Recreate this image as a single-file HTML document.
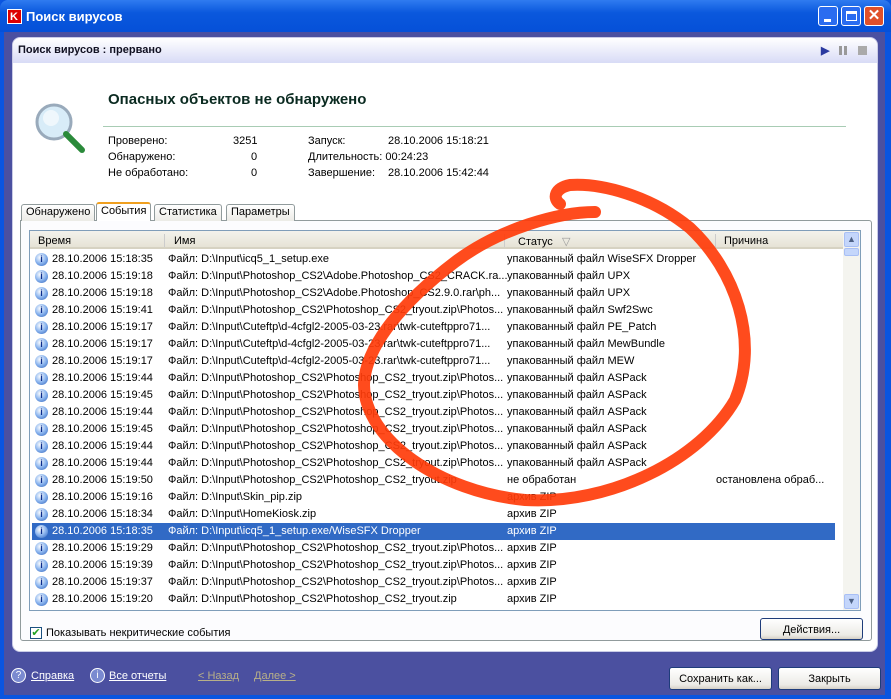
<!DOCTYPE html>
<html><head><meta charset="utf-8"><style>
*{box-sizing:border-box;margin:0;padding:0}
body{width:891px;height:699px;overflow:hidden;background:#0a55e0;font-family:"Liberation Sans",sans-serif;font-size:11px;color:#000;position:relative}
.abs{position:absolute}
#title{left:0;top:0;width:891px;height:32px;background:linear-gradient(#2f7bf0,#0a58dd 40%,#0550d8);border-radius:8px 8px 0 0;color:#fff;font:bold 13px "Liberation Sans",sans-serif}
#frame{left:4px;top:32px;width:881px;height:663px;background:#4b50a0}
#panel{left:12px;top:37px;width:866px;height:615px;background:#fff;border-radius:8px;border:1px solid #c9cbe6}
#hdr{left:13px;top:38px;width:864px;height:25px;background:linear-gradient(#fff,#d8dbf6);border-radius:8px 8px 0 0;font-weight:bold;font-size:11px;color:#112}
.t{position:absolute;white-space:nowrap}
.row{position:absolute;left:32px;width:803px;height:17px;font-size:11px;line-height:17px}
.row span{position:absolute;white-space:nowrap}
.ic{left:3px;top:2px;width:13px;height:13px;border-radius:50%;background:radial-gradient(circle at 40% 35%,#fff,#8ab4ee 50%,#2a5db8);color:#0a2c8c;font-size:9px;line-height:13px;text-align:center;font-weight:bold}
.btn{position:absolute;border:1px solid #1e3c7a;border-radius:3px;background:linear-gradient(#fff,#ecebe6 80%,#d6d0c5);text-align:center;line-height:22px;font-size:11px}
.tab{position:absolute;top:204px;height:17px;border:1px solid #919b9c;border-bottom:none;background:linear-gradient(#fff,#ecebe6);font-size:11px;line-height:15px;padding:0 4px;border-radius:3px 3px 0 0}
</style></head><body>
<div id="frame" class="abs"></div>
<div id="title" class="abs">
 <div class="abs" style="left:7px;top:9px;width:15px;height:15px;background:#fff"><div style="position:absolute;left:1px;top:1px;width:13px;height:13px;background:#d00"></div><div style="position:absolute;left:3px;top:2px;color:#fff;font:bold 11px sans-serif">K</div></div>
 <div class="t" style="left:26px;top:9px">Поиск вирусов</div>
 <div class="abs" style="left:818px;top:6px;width:20px;height:20px;border:1px solid #fff;border-radius:3px;background:#2a6cf0"><div style="position:absolute;left:5px;top:12px;width:7px;height:3px;background:#fff"></div></div>
 <div class="abs" style="left:841px;top:6px;width:20px;height:20px;border:1px solid #fff;border-radius:3px;background:#2a6cf0"><div style="position:absolute;left:4px;top:4px;width:11px;height:10px;border:1px solid #fff;border-top:3px solid #fff"></div></div>
 <div class="abs" style="left:864px;top:6px;width:20px;height:20px;border:1px solid #fff;border-radius:3px;background:#e0502a;color:#fff;text-align:center;font:bold 15px/18px sans-serif">✕</div>
</div>
<div id="panel" class="abs"></div>
<div id="hdr" class="abs"><div class="t" style="left:5px;top:6px">Поиск вирусов : прервано</div>
 <div class="t" style="left:808px;top:6px;color:#2a3aa0;font-size:11px">▶</div>
 <div class="abs" style="left:826px;top:8px;width:3px;height:9px;background:#999"></div><div class="abs" style="left:831px;top:8px;width:3px;height:9px;background:#999"></div>
 <div class="abs" style="left:845px;top:8px;width:9px;height:9px;background:#aaa"></div>
</div>
<svg class="abs" style="left:34px;top:100px" width="56" height="56"><circle cx="20" cy="22" r="17" fill="#d8ecf8" stroke="#9ab" stroke-width="3"/><circle cx="17" cy="18" r="8" fill="#fff" opacity=".6"/><path d="M32 34 L48 50" stroke="#2a8a3a" stroke-width="6" stroke-linecap="round"/></svg>
<div class="t" style="left:108px;top:91px;font-size:15px;font-weight:bold;color:#0a2a20">Опасных объектов не обнаружено</div>
<div class="abs" style="left:103px;top:126px;width:743px;height:1px;background:#a8ccb4"></div>
<div class="t" style="left:108px;top:135px">Проверено:</div><div class="t" style="left:233px;top:135px">3251</div>
<div class="t" style="left:108px;top:151px">Обнаружено:</div><div class="t" style="left:251px;top:151px">0</div>
<div class="t" style="left:108px;top:167px">Не обработано:</div><div class="t" style="left:251px;top:167px">0</div>
<div class="t" style="left:308px;top:135px">Запуск:</div><div class="t" style="left:388px;top:135px">28.10.2006 15:18:21</div>
<div class="t" style="left:308px;top:151px">Длительность: 00:24:23</div>
<div class="t" style="left:308px;top:167px">Завершение:</div><div class="t" style="left:388px;top:167px">28.10.2006 15:42:44</div>
<div class="abs" style="left:20px;top:220px;width:852px;height:421px;border:1px solid #919b9c;border-radius:0 3px 3px 3px;background:#fcfcfe"></div>
<div class="tab" style="left:21px">Обнаружено</div>
<div class="tab" style="left:96px;top:202px;height:19px;border-top:2px solid #f0a020;background:#fff">События</div>
<div class="tab" style="left:154px">Статистика</div>
<div class="tab" style="left:226px">Параметры</div>
<div class="abs" style="left:29px;top:230px;width:832px;height:381px;border:1px solid #7f9db9;background:#fff"></div>
<div class="abs" style="left:30px;top:231px;width:813px;height:18px;background:linear-gradient(#f3f2ec,#e6e3d6);border-bottom:2px solid #d6d2c2"></div>
<div class="t" style="left:38px;top:235px">Время</div><div class="abs" style="left:164px;top:234px;width:1px;height:13px;background:#ccc"></div>
<div class="t" style="left:174px;top:235px">Имя</div><div class="abs" style="left:504px;top:234px;width:1px;height:13px;background:#ccc"></div>
<div class="t" style="left:518px;top:235px">Статус &nbsp;&nbsp;<span style="color:#999">▽</span></div><div class="abs" style="left:715px;top:234px;width:1px;height:13px;background:#ccc"></div>
<div class="t" style="left:724px;top:235px">Причина</div>
<div class="abs" style="left:843px;top:231px;width:17px;height:379px;background:#f4f4ef"></div>
<div class="abs" style="left:844px;top:232px;width:15px;height:15px;background:#c4d6fb;border:1px solid #a8bff5;border-radius:2px;color:#4d6185;font-size:9px;text-align:center;line-height:13px">▲</div>
<div class="abs" style="left:844px;top:248px;width:15px;height:8px;background:#c4d6fb;border:1px solid #a8bff5;border-radius:2px"></div>
<div class="abs" style="left:844px;top:594px;width:15px;height:15px;background:#c4d6fb;border:1px solid #a8bff5;border-radius:2px;color:#4d6185;font-size:9px;text-align:center;line-height:13px">▼</div>
<div id="rows"></div>
<div class="abs" style="left:30px;top:627px;width:12px;height:12px;border:1px solid #1c5180;background:#fff;color:#21a121;font-size:11px;line-height:10px;text-align:center">✔</div>
<div class="t" style="left:46px;top:627px">Показывать некритические события</div>
<div class="btn" style="left:760px;top:618px;width:103px;height:22px">Действия...</div>
<div class="abs" style="left:11px;top:668px;width:15px;height:15px;border-radius:50%;background:#7a8ad0;border:1px solid #fff;color:#fff;font-size:10px;text-align:center;line-height:13px">?</div>
<div class="t" style="left:31px;top:670px;color:#fff;text-decoration:underline">Справка</div>
<div class="abs" style="left:90px;top:668px;width:15px;height:15px;border-radius:50%;background:#7a8ad0;border:1px solid #fff;color:#fff;font-size:10px;text-align:center;line-height:13px">i</div>
<div class="t" style="left:109px;top:670px;color:#fff;text-decoration:underline">Все отчеты</div>
<div class="t" style="left:198px;top:670px;color:#b8b088;text-decoration:underline">&lt; Назад</div>
<div class="t" style="left:254px;top:670px;color:#b8b088;text-decoration:underline">Далее &gt;</div>
<div class="btn" style="left:669px;top:667px;width:103px;height:23px">Сохранить как...</div>
<div class="btn" style="left:778px;top:667px;width:103px;height:23px">Закрыть</div>
<svg class="abs" style="left:0;top:0" width="891" height="699"><path d="M595 212 C560 212 500 228 455 262 C405 300 365 345 364 385 C365 440 440 492 525 500 C610 505 700 460 735 400 C760 340 735 270 690 228 C650 195 600 183 570 185 C555 188 552 198 560 204" fill="none" stroke="#ff3c0a" stroke-width="12" stroke-linecap="round" opacity=".92"/></svg>
<script>
var d=[["28.10.2006 15:18:35","Файл: D:\\Input\\icq5_1_setup.exe","упакованный файл WiseSFX Dropper",""],
["28.10.2006 15:19:18","Файл: D:\\Input\\Photoshop_CS2\\Adobe.Photoshop_CS2_CRACK.ra...","упакованный файл UPX",""],
["28.10.2006 15:19:18","Файл: D:\\Input\\Photoshop_CS2\\Adobe.Photoshop_CS2.9.0.rar\\ph...","упакованный файл UPX",""],
["28.10.2006 15:19:41","Файл: D:\\Input\\Photoshop_CS2\\Photoshop_CS2_tryout.zip\\Photos...","упакованный файл Swf2Swc",""],
["28.10.2006 15:19:17","Файл: D:\\Input\\Cuteftp\\d-4cfgl2-2005-03-23.rar\\twk-cuteftppro71...","упакованный файл PE_Patch",""],
["28.10.2006 15:19:17","Файл: D:\\Input\\Cuteftp\\d-4cfgl2-2005-03-23.rar\\twk-cuteftppro71...","упакованный файл MewBundle",""],
["28.10.2006 15:19:17","Файл: D:\\Input\\Cuteftp\\d-4cfgl2-2005-03-23.rar\\twk-cuteftppro71...","упакованный файл MEW",""],
["28.10.2006 15:19:44","Файл: D:\\Input\\Photoshop_CS2\\Photoshop_CS2_tryout.zip\\Photos...","упакованный файл ASPack",""],
["28.10.2006 15:19:45","Файл: D:\\Input\\Photoshop_CS2\\Photoshop_CS2_tryout.zip\\Photos...","упакованный файл ASPack",""],
["28.10.2006 15:19:44","Файл: D:\\Input\\Photoshop_CS2\\Photoshop_CS2_tryout.zip\\Photos...","упакованный файл ASPack",""],
["28.10.2006 15:19:45","Файл: D:\\Input\\Photoshop_CS2\\Photoshop_CS2_tryout.zip\\Photos...","упакованный файл ASPack",""],
["28.10.2006 15:19:44","Файл: D:\\Input\\Photoshop_CS2\\Photoshop_CS2_tryout.zip\\Photos...","упакованный файл ASPack",""],
["28.10.2006 15:19:44","Файл: D:\\Input\\Photoshop_CS2\\Photoshop_CS2_tryout.zip\\Photos...","упакованный файл ASPack",""],
["28.10.2006 15:19:50","Файл: D:\\Input\\Photoshop_CS2\\Photoshop_CS2_tryout.zip","не обработан","остановлена обраб..."],
["28.10.2006 15:19:16","Файл: D:\\Input\\Skin_pip.zip","архив ZIP",""],
["28.10.2006 15:18:34","Файл: D:\\Input\\HomeKiosk.zip","архив ZIP",""],
["28.10.2006 15:18:35","Файл: D:\\Input\\icq5_1_setup.exe/WiseSFX Dropper","архив ZIP",""],
["28.10.2006 15:19:29","Файл: D:\\Input\\Photoshop_CS2\\Photoshop_CS2_tryout.zip\\Photos...","архив ZIP",""],
["28.10.2006 15:19:39","Файл: D:\\Input\\Photoshop_CS2\\Photoshop_CS2_tryout.zip\\Photos...","архив ZIP",""],
["28.10.2006 15:19:37","Файл: D:\\Input\\Photoshop_CS2\\Photoshop_CS2_tryout.zip\\Photos...","архив ZIP",""],
["28.10.2006 15:19:20","Файл: D:\\Input\\Photoshop_CS2\\Photoshop_CS2_tryout.zip","архив ZIP",""]];
var h="";d.forEach(function(r,i){var sel=i==16;h+='<div class="row" style="top:'+(251+i*17)+'px;'+(sel?'background:#316ac5;color:#fff':'')+'"><span class="ic">i</span><span style="left:20px">'+r[0]+'</span><span style="left:136px">'+r[1]+'</span><span style="left:475px">'+r[2]+'</span><span style="left:684px">'+r[3]+'</span></div>';});
document.getElementById("rows").innerHTML=h;
</script>
</body></html>
